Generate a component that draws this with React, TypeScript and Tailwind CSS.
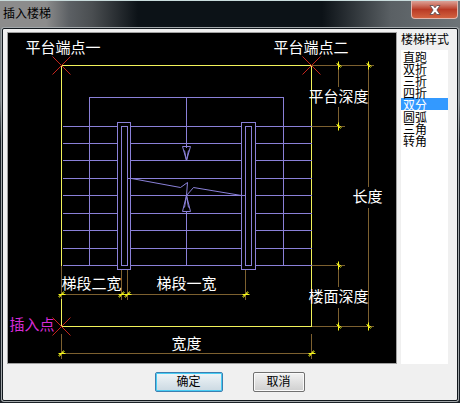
const styles = ["直跑", "双折", "三折", "四折", "双分", "圆弧", "三角", "转角"];

const treads = [126, 143, 160, 178, 195, 213, 230, 248, 265];

const crosses = [
  [61, 65],
  [311, 65],
  [61, 326],
];

const sideTicks = [
  [338, 65],
  [368, 65],
  [338, 126],
  [338, 265],
  [338, 326],
  [368, 326],
];

const bottomTicks = [
  [61, 294],
  [121, 294],
  [127, 294],
  [245, 294],
  [61, 353],
  [311, 353],
];

const labels = [
  { x: 25, y: 52, text: "平台端点一" },
  { x: 273, y: 52, text: "平台端点二" },
  { x: 308, y: 101, text: "平台深度" },
  { x: 352, y: 201, text: "长度" },
  { x: 308, y: 301, text: "楼面深度" },
  { x: 61, y: 288, text: "梯段二宽" },
  { x: 156, y: 288, text: "梯段一宽" },
  { x: 171, y: 348, text: "宽度" },
];

function StairPlan() {
  return (
    <svg viewBox="7.5 32.5 388 330" className="block h-auto w-full bg-black" fill="none" role="img" aria-label="双分楼梯">
      {/* dimension lines */}
      <g stroke="#7d602f" shapeRendering="crispEdges">
        <path d="M311 65H373M338 65V86M338 106V126M311 126H344M311 265H344M338 265V286M338 307V326M311 326H373" />
        <path d="M368 65V186M368 207V326" />
        <path d="M61 265V299M121 269V299M127 269V299M245 269V299M61 294H245" />
        <path d="M61 333V358M311 333V358M61 353H311" />
      </g>

      <path d="M61 265V65H311V326H61V298" stroke="#f2f25a" shapeRendering="crispEdges" />

      {/* treads and side strings */}
      <g stroke="#8a80d8" shapeRendering="crispEdges">
        <path d="M89 265V97H283V265M186 97V147M186 211V265" />
        {treads.map((y) => (
          <path key={y} d={`M62 ${y}H117M130 ${y}H241M255 ${y}H311`} />
        ))}
        <path d="M117 122H130V269H117ZM121 126H127V265H121Z" />
        <path d="M241 122H255V269H241ZM245 126H251V265H245Z" />
      </g>

      {/* break line and direction arrows */}
      <g stroke="#8a80d8">
        <path d="M127 178H131L180 187L187 182L186 195L193 187L241 195H245" />
        <path d="M182 146H190L186 160ZM182 211H190L186 195Z" />
        <path d="M184 150L186 160L188 150M184 207L186 195L188 207" />
      </g>

      {crosses.map(([x, y]) => (
        <path key={`${x}-${y}`} d={`M${x - 9} ${y - 9}L${x + 9} ${y + 9}M${x + 9} ${y - 9}L${x - 9} ${y + 9}`} stroke="#c4241c" />
      ))}

      <g stroke="#f4f41c">
        {sideTicks.map(([x, y]) => (
          <path key={`${x}-${y}`} d={`M${x} ${y - 4}V${y + 4}M${x - 2} ${y - 2}L${x + 2} ${y + 2}M${x - 1} ${y - 2}L${x + 3} ${y + 1}`} />
        ))}
        {bottomTicks.map(([x, y]) => (
          <path key={`${x}-${y}`} d={`M${x - 3} ${y}H${x + 4}M${x - 2} ${y + 3}L${x + 2} ${y - 3}M${x - 3} ${y + 2}L${x + 3} ${y - 2}`} />
        ))}
      </g>

      <g fill="#fff" className="font-['Noto_Sans_CJK_SC',sans-serif] text-[15px]">
        {labels.map((l) => (
          <text key={l.text} x={l.x} y={l.y}>
            {l.text}
          </text>
        ))}
        <text x={9} y={329} fill="#d62bd6">
          插入点
        </text>
      </g>
    </svg>
  );
}

export default function App() {
  return (
    <div className="bg-linear-to-b from-[#7b8184] from-25% to-[#1b2127] to-35% px-0.5 pb-0.5 font-['Liberation_Sans','Noto_Sans_CJK_SC',sans-serif] text-xs text-black">
      <header className="-mx-0.5 flex h-7 items-start justify-between border-t border-[#c9dcdc] bg-[linear-gradient(to_right,#8c8c8c_0%,#8c8c8c_10%,#5c6064_15%,#4a4e51_20%,#0c1217_30%,#0c1217_70%,#5a6064_85%,#6d7478_100%)]">
        <h1 className="pt-1 pl-[3px] leading-[18px]">插入楼梯</h1>
        <button
          type="button"
          aria-label="关闭"
          className="mr-0.5 flex h-[18px] w-[47px] items-center justify-center rounded-b border border-t-0 border-[#e3b5ab] bg-linear-to-b from-[#dba197] via-[#b93a25] via-50% to-[#d2613f]"
        >
          <svg viewBox="0 0 12 10" className="h-2.5 w-3">
            <path d="M1 .5h3.2L6 2.8 7.8.5H11L7.9 5 11 9.5H7.8L6 7.2 4.2 9.5H1L4.1 5z" fill="#fff" stroke="#54494d" strokeWidth=".8" />
          </svg>
        </button>
      </header>

      <main className="rounded-xs border border-[#12181d] bg-[#f0f0f0] pt-[3px] pr-[5px] pb-2 pl-1 ring-1 ring-[#a3a8ab]">
        <div className="flex gap-1">
          <div className="min-w-0 flex-1 border border-[#a0a0a0]">
            <StairPlan />
          </div>
          <div className="flex w-[51px] shrink-0 flex-col pr-1">
            <label htmlFor="stair-style" className="h-[18px] leading-4 whitespace-nowrap">
              楼梯样式
            </label>
            <select
              id="stair-style"
              size={8}
              defaultValue="双分"
              className="w-full flex-1 overflow-hidden bg-white p-0 text-xs outline-none"
            >
              {styles.map((s) => (
                <option
                  key={s}
                  className="flex h-3 min-h-0 items-center p-0 pl-0.5 leading-3 checked:bg-[#3399ff] checked:bg-linear-to-r checked:from-[#3399ff] checked:to-[#3399ff] checked:text-white"
                >
                  {s}
                </option>
              ))}
            </select>
          </div>
        </div>

        <div className="mt-2 flex justify-center gap-[30px]">
          <button
            type="button"
            className="h-5 w-[68px] rounded-xs border border-[#3c7fb1] bg-linear-to-b from-[#f0f5f8] to-[#cbd9e2] leading-4 inset-ring inset-ring-[#48cdf4]"
          >
            确定
          </button>
          <button
            type="button"
            className="h-5 w-[52px] rounded-xs border border-[#707070] bg-linear-to-b from-[#f2f2f2] to-[#cfcfcf] leading-4 inset-ring inset-ring-[#fafafa]"
          >
            取消
          </button>
        </div>
      </main>
    </div>
  );
}
